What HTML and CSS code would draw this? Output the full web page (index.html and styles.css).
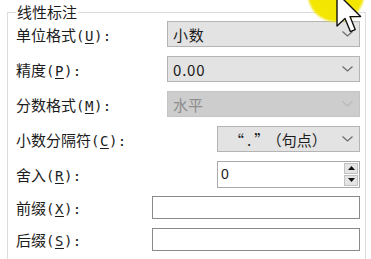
FILE: index.html
```html
<!DOCTYPE html>
<html lang="zh-CN">
<head>
    <meta charset="UTF-8">
    <title>线性标注</title>
    <link rel="stylesheet" href="styles.css">
</head>
<body>
    <fieldset class="group">
        <legend>线性标注</legend>

        <div class="row">
            <span class="label">单位格式<span class="key">(<u>U</u>):</span></span>
            <div class="combo wide">
                <span class="mono">小数</span>
                <svg class="chev" width="11" height="6" viewBox="0 0 11 6"><path d="M0.5 0.5 L5.5 5 L10.5 0.5" fill="none" stroke="#6b6b6b" stroke-width="1.2"/></svg>
            </div>
        </div>

        <div class="row">
            <span class="label">精度<span class="key">(<u>P</u>):</span></span>
            <div class="combo wide">
                <span class="mono">0.00</span>
                <svg class="chev" width="11" height="6" viewBox="0 0 11 6"><path d="M0.5 0.5 L5.5 5 L10.5 0.5" fill="none" stroke="#6b6b6b" stroke-width="1.2"/></svg>
            </div>
        </div>

        <div class="row">
            <span class="label">分数格式<span class="key">(<u>M</u>):</span></span>
            <div class="combo wide disabled">
                <span>水平</span>
                <svg class="chev" width="11" height="6" viewBox="0 0 11 6"><path d="M0.5 0.5 L5.5 5 L10.5 0.5" fill="none" stroke="#b9b9b9" stroke-width="1.2"/></svg>
            </div>
        </div>

        <div class="row">
            <span class="label">小数分隔符<span class="key">(<u>C</u>):</span></span>
            <div class="combo narrow centered">
                <span><span class="quotes">“.”</span>（句点）</span>
                <svg class="chev" width="11" height="6" viewBox="0 0 11 6"><path d="M0.5 0.5 L5.5 5 L10.5 0.5" fill="none" stroke="#6b6b6b" stroke-width="1.2"/></svg>
            </div>
        </div>

        <div class="row">
            <span class="label">舍入<span class="key">(<u>R</u>):</span></span>
            <div class="spin narrow">
                <span class="spin-value">0</span>
                <div class="spin-btns">
                    <div class="spin-btn"><svg width="7" height="4" viewBox="0 0 7 4"><path d="M0 4 L3.5 0 L7 4 Z" fill="#111"/></svg></div>
                    <div class="spin-btn"><svg width="7" height="4" viewBox="0 0 7 4"><path d="M0 0 L3.5 4 L7 0 Z" fill="#111"/></svg></div>
                </div>
            </div>
        </div>

        <div class="row short">
            <span class="label">前缀<span class="key">(<u>X</u>):</span></span>
            <div class="textbox"></div>
        </div>

        <div class="row short">
            <span class="label">后缀<span class="key">(<u>S</u>):</span></span>
            <div class="textbox"></div>
        </div>
    </fieldset>

    <!-- 屏幕录制的光标高亮 -->
    <div class="cursor-glow"></div>
    <svg class="cursor" width="26" height="46" viewBox="0 0 13 23">
        <path d="M0.5 0.5 L0.5 17 L4.5 13.2 L7.2 19.8 L9.6 18.8 L7 12.3 L12.3 12.3 Z" fill="#fff" stroke="#111" stroke-width="0.7" stroke-linejoin="round"/>
    </svg>
</body>
</html>
```

FILE: styles.css
```css
body {
    margin: 0;
    padding: 0;
    background-color: #ffffff;
    font-family: "Noto Sans CJK SC", "Liberation Sans", sans-serif;
    font-size: 15px;
    color: #1c1c1c;
    width: 371px;
    height: 259px;
    overflow: hidden;
    position: relative;
}

.group {
    box-sizing: border-box;
    width: 359px;
    margin: 2px 0 0 7px;
    padding: 0 5px 20px 8px;
    border: 1px solid #dcdcdc;
    min-inline-size: 0;
}

.group legend {
    padding: 0 1px;
    line-height: 20px;
    height: 20px;
    margin-bottom: -1px;
}

.row {
    display: flex;
    justify-content: space-between;
    align-items: center;
    height: 26px;
    margin-bottom: 9px;
}

.row.short {
    height: 23px;
}

.label {
    line-height: 20px;
    padding-top: 2px;
}

.key {
    font-family: "DejaVu Sans Mono", monospace;
    font-size: 14px;
    letter-spacing: 0.5px;
}

.key u {
    text-underline-offset: 2px;
}

.combo {
    box-sizing: border-box;
    height: 26px;
    display: flex;
    align-items: center;
    justify-content: space-between;
    padding: 0 6px 0 5px;
    background-color: #e3e3e3;
    border: 1px solid #b4b4b4;
}

.combo.wide {
    width: 193px;
}

.narrow {
    width: 143px;
}

.mono {
    letter-spacing: 0.8px;
}

.combo.centered span {
    padding-left: 3px;
}

.quotes {
    letter-spacing: 3px;
    margin-right: 2px;
}

.combo.disabled {
    background-color: #cdcdcd;
    border-color: #c4c4c4;
    color: #8e8e8e;
}

.chev {
    display: block;
}

.spin {
    box-sizing: border-box;
    height: 27px;
    display: flex;
    align-items: center;
    justify-content: space-between;
    padding: 0 1px 0 3px;
    background-color: #fff;
    border: 1px solid #a9a9a9;
}

.spin-value {
    font-family: "Liberation Sans", sans-serif;
    font-size: 14px;
}

.spin-btns {
    display: flex;
    flex-direction: column;
    gap: 1px;
}

.spin-btn {
    box-sizing: border-box;
    width: 14px;
    height: 11px;
    display: flex;
    align-items: center;
    justify-content: center;
    background-color: #e4e4e4;
    border: 1px solid #c2c2c2;
}

.textbox {
    box-sizing: border-box;
    width: 208px;
    height: 23px;
    background-color: #fff;
    border: 1px solid #8a8a8a;
}

.cursor-glow {
    position: absolute;
    left: 308px;
    top: -34px;
    width: 56px;
    height: 56px;
    border-radius: 50%;
    background-color: #f3e600;
    filter: blur(1px);
}

.cursor {
    position: absolute;
    left: 336px;
    top: -8px;
}
```
